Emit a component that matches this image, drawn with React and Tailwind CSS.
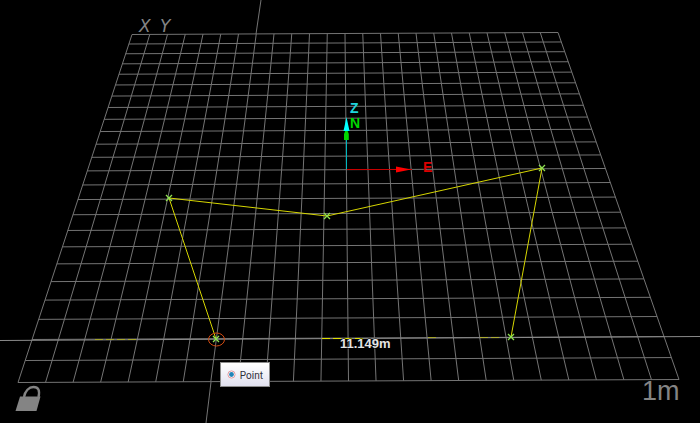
import React, { useState } from 'react';

const DIVISIONS = 24;

// corners of the XY plane, weight is the inverse of the distance to the camera
const corners = {
  topLeft: { x: 132, y: 34, weight: 661 },
  topRight: { x: 558, y: 32, weight: 661 },
  bottomLeft: { x: 18, y: 382, weight: 426 },
  bottomRight: { x: 679, y: 379, weight: 426 },
};

const mix = (a, b, t) => {
  const weight = a.weight * (1 - t) + b.weight * t;
  return {
    x: (a.x * a.weight * (1 - t) + b.x * b.weight * t) / weight,
    y: (a.y * a.weight * (1 - t) + b.y * b.weight * t) / weight,
    weight,
  };
};

const steps = Array.from({ length: DIVISIONS + 1 }, (_, i) => i / DIVISIONS);

const columns = steps.map((t) => [
  mix(corners.topLeft, corners.topRight, t),
  mix(corners.bottomLeft, corners.bottomRight, t),
]);

const rows = steps.map((t) => [
  mix(corners.topLeft, corners.bottomLeft, t),
  mix(corners.topRight, corners.bottomRight, t),
]);

const points = [
  { id: 1, x: 216, y: 339 },
  { id: 2, x: 169, y: 198 },
  { id: 3, x: 327, y: 216 },
  { id: 4, x: 542, y: 168 },
  { id: 5, x: 511, y: 337 },
];

const Grid = () => (
  <g stroke="#747474" strokeWidth="1">
    {[...columns, ...rows].map(([from, to], i) => (
      <line key={i} x1={from.x} y1={from.y + 0.5} x2={to.x} y2={to.y + 0.5} />
    ))}
    <line x1="261" y1="0" x2="256" y2="34" />
    <line x1="211" y1="382" x2="206" y2="423" />
    <line x1="0" y1="340.5" x2="700" y2="336.5" stroke="#8a8a8a" />
  </g>
);

const Axes = () => (
  <g fontFamily="'Liberation Sans', Arial, sans-serif" fontWeight="bold" fontSize="14">
    <line x1="346.5" y1="130" x2="346.5" y2="169" stroke="#00b8c0" />
    <path d="M347 169 H412 V170 H347 Z" fill="#c80000" />
    <path d="M346.5 128 L348.8 134 V140 H344 V134 Z" fill="#00d800" />
    <path d="M346.5 117 L349.5 131 H343.5 Z" fill="#00ffff" />
    <path d="M411 169.5 L396 166.5 V172.5 Z" fill="#ff0000" />
    <text x="350" y="113" fill="#1fd3dc">Z</text>
    <text x="350" y="128" fill="#00d800">N</text>
    <text x="423" y="172" fill="#dc0000">E</text>
  </g>
);

const Polyline = () => (
  <g fill="none">
    <polyline points={points.map(({ x, y }) => `${x},${y}`).join(' ')} stroke="#d6d600" />
    <path d="M95 339.5 H137 M428 337.5 H438 M480 337.5 H500" stroke="#c8c800" strokeDasharray="8 3" opacity="0.6" />
    <path d="M322 338.5 H363" stroke="#e0e000" strokeDasharray="8 3" />
    {points.map(({ id, x, y }) => (
      <path key={id} d={`M${x - 3} ${y - 3} l6 6 m0 -6 l-6 6`} stroke="#8ee050" strokeWidth="1.3" />
    ))}
    <ellipse cx="216.5" cy="339.5" rx="8" ry="6.5" stroke="#d24c12" />
  </g>
);

const Lock = () => (
  <g>
    <path d="M24 397 C25 391 29 387 33.5 387 C38.5 387 40 390.5 38.5 397" fill="none" stroke="#848484" strokeWidth="2.4" />
    <path d="M20 396.5 H40.5 L36.5 411 H15.5 Z" fill="#848484" />
  </g>
);

const PointIcon = () => (
  <svg viewBox="0 0 9 9" className="-mt-1 h-[9px] w-[9px] shrink-0" aria-hidden="true">
    <circle cx="4.5" cy="4.5" r="3.6" fill="#ffffff" stroke="#e39a9e" />
    <circle cx="4.5" cy="4.5" r="2.4" fill="#2385b8" />
  </svg>
);

const App = () => {
  const [isPicked, setIsPicked] = useState(false);

  return (
    <main className="min-h-screen bg-black">
      <div className="relative w-full">
        <svg viewBox="0 0 700 423" className="block h-auto w-full" role="img" aria-label="XY">
          <Grid />
          <g fill="#848484" fontFamily="'DejaVu Sans', sans-serif" fontStyle="italic" fontSize="17">
            <text x="139" y="32">X</text>
            <text x="160" y="32">Y</text>
          </g>
          <text x="642" y="400" fill="#848484" fontFamily="'Liberation Sans', Arial, sans-serif" fontSize="27">1m</text>
          <Axes />
          <Polyline />
          <Lock />
          <text x="340" y="348" fill="#e4e4e4" stroke="#000000" strokeWidth="1" paintOrder="stroke" fontFamily="'Liberation Sans', Arial, sans-serif" fontWeight="bold" fontSize="13">11.149m</text>
        </svg>
        <button
          type="button"
          aria-pressed={isPicked}
          onClick={() => setIsPicked(!isPicked)}
          className="absolute top-[85.6%] left-[31.4%] flex items-center gap-1 border border-[#8c8c8c] bg-linear-to-b from-white to-[#e2e2f0] px-[6px] pt-[5px] pb-[2px] font-[Roboto,sans-serif] text-[10px] leading-[16px] text-[#303038]"
        >
          <PointIcon />
          Point
        </button>
      </div>
    </main>
  );
};

export default App;
